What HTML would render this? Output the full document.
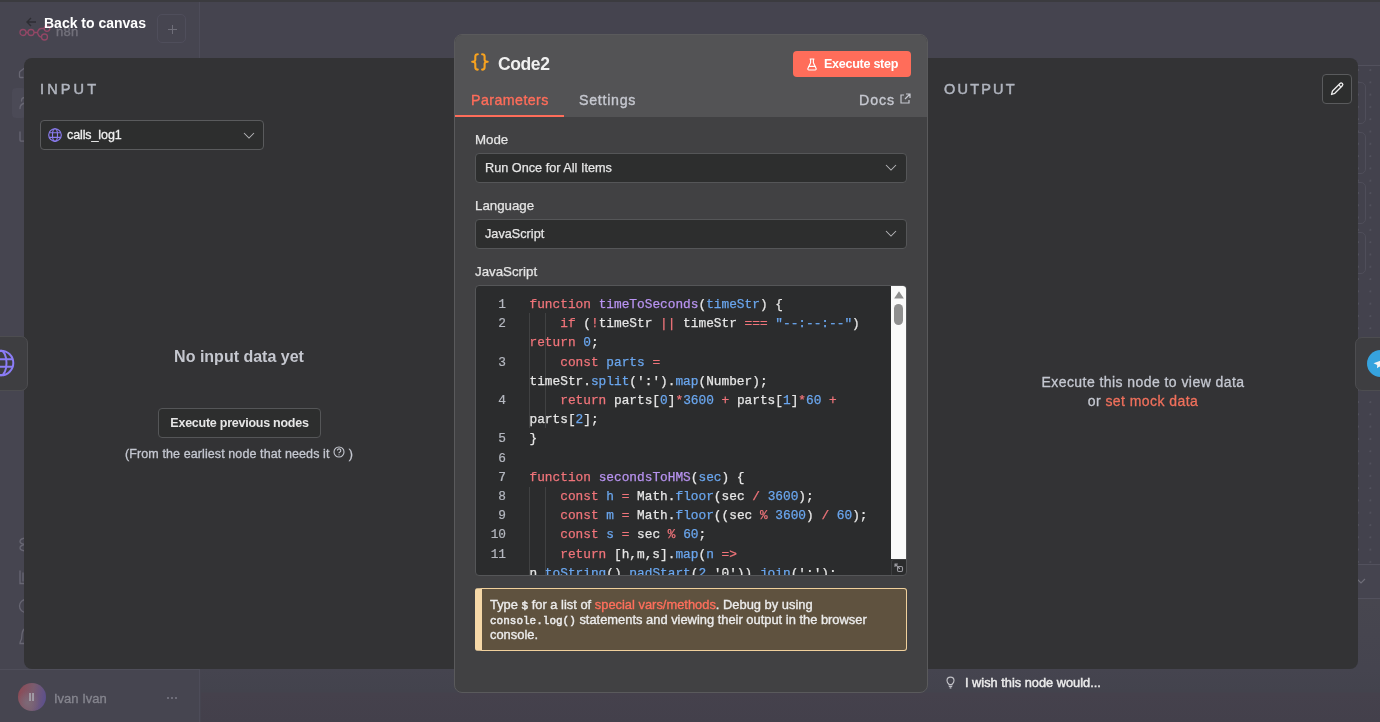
<!DOCTYPE html>
<html><head><meta charset="utf-8">
<style>
*{box-sizing:border-box;margin:0;padding:0}
html,body{width:1380px;height:722px;overflow:hidden}
body{background:#45444f;font-family:"Liberation Sans",sans-serif;position:relative;color:#e0e0e0}
.a{position:absolute}
#topline{left:0;top:0;width:1380px;height:2px;background:#3b3b3f}
#sidebar{left:0;top:2px;width:200px;height:720px;background:#47465199;border-right:1px solid #4d4c59}
#footer{left:0;top:669px;width:200px;height:1px;background:#4f4e5a}
#modal{left:24px;top:58px;width:1334px;height:611px;background:#333335;border-radius:8px}
#back{left:44px;top:15px;font-size:14px;font-weight:bold;color:#fff;white-space:nowrap}
.lio{font-size:14.5px;font-weight:normal;letter-spacing:3.15px;color:#b0b4be;-webkit-text-stroke:0.5px #b0b4be}
#panel{left:454px;top:34px;width:474px;height:659px;background:#414143;border-radius:8px;overflow:hidden;border:1px solid #5a5a5c}
#phead{left:0;top:0;width:100%;height:82px;background:#535355}
.sel{width:432px;height:30px;background:#2d2e2e;border:1px solid #555658;border-radius:4px;font-size:12.7px;color:#e6e6e6;-webkit-text-stroke:0.25px #e6e6e6;padding-left:9px;line-height:29px}
.chev{position:absolute;right:9px;top:10px}
.fl{font-size:13.3px;color:#e4e4e4;-webkit-text-stroke:0.25px #e4e4e4}
#editor{left:475px;top:285px;width:432px;height:291px;background:#2b2c2d;border:1px solid #555658;border-radius:4px;overflow:hidden}
.code{position:absolute;left:53.5px;top:9px;font-family:"Liberation Mono",monospace;font-size:12.8px;line-height:19.2px;color:#e6e6e6;white-space:pre;-webkit-text-stroke:0.25px}
.lns{position:absolute;left:0;top:9px;width:30px;text-align:right;color:#b5b8c0;-webkit-text-stroke:0.2px;font-family:"Liberation Mono",monospace;font-size:12.8px;line-height:19.2px;white-space:pre}
.k{color:#f0747a}.f{color:#b893f0}.p{color:#6aa6ee}.o{color:#f0747a}.n{color:#6aa6ee}.s{color:#6aa6ee}
#hint{left:475px;top:588px;width:432px;height:63px;background:#5f523f;border:1px solid #f0d09c;border-left:7px solid #f6d8a8;border-radius:3px;font-size:12.9px;line-height:15px;color:#ececec;padding:8px 0 0 8px;-webkit-text-stroke:0.35px}
#hint .mono{font-size:11px;line-height:1;-webkit-text-stroke:0.45px}
.mono{font-family:"Liberation Mono",monospace}
.btnx{background:#2d2e2e;border:1px solid #5a5b5d;border-radius:4px}
#wrap{position:absolute;left:0;top:0;width:1380px;height:722px;will-change:transform}
</style></head><body><div id="wrap">
<div id="topline" class="a"></div>
<div id="sidebar" class="a"></div>
<div id="footer" class="a"></div>
<div class="a" style="left:200px;top:65px;width:1180px;height:500px;background-color:#43424d;background-image:radial-gradient(circle at 1.2px 1.2px,#53525e 0.7px,transparent 1.2px);background-size:12.3px 12.3px;background-position:1.1px 3px;border-top:1px solid #52515d;border-bottom:1px solid #52515d"></div>
<div class="a" style="left:200px;top:598px;width:1180px;height:1px;background:#52515d"></div>
<div class="a" style="left:201px;top:599px;width:1179px;height:123px;background:linear-gradient(#47464f 0px,#45444f 70px,#43434d 93px,#45414c 94px,#43404b 123px)"></div>
<svg class="a" style="left:1356px;top:578px" width="10" height="6" viewBox="0 0 10 6"><path d="M1 1l4 4 4-4" fill="none" stroke="#6e6d78" stroke-width="1.1"/></svg>
<div class="a" style="left:1340px;top:82px;width:26px;height:42px;border:1px solid #4f4e5a;border-radius:5px"></div>
<div class="a" style="left:1340px;top:132px;width:26px;height:42px;border:1px solid #4f4e5a;border-radius:5px"></div>
<div class="a" style="left:1340px;top:182px;width:26px;height:42px;border:1px solid #4f4e5a;border-radius:5px"></div>
<div class="a" style="left:1340px;top:232px;width:26px;height:42px;border:1px solid #4f4e5a;border-radius:5px"></div>
<!-- n8n logo -->
<svg class="a" style="left:18px;top:24px" width="34" height="18" viewBox="0 0 34 18">
 <g fill="none" stroke="#934766" stroke-width="1.3">
  <circle cx="5" cy="8.5" r="3"/><circle cx="13" cy="8.5" r="3"/><circle cx="26.5" cy="13" r="3"/><circle cx="29" cy="4.5" r="2.8"/>
  <path d="M8 8.5h2M16 8.5h3.5M19.5 8.5q1-4 4-4h2.7M19.5 8.5q1 4.5 4 4.5"/>
 </g>
</svg>
<div class="a" style="left:56px;top:23.5px;font-size:13px;color:#72717b;-webkit-text-stroke:0.4px #72717b;letter-spacing:0.3px">n8n</div>
<div class="a" style="left:157px;top:14px;width:29px;height:29px;border:1px solid #4f4e5b;border-radius:5px"></div>
<div class="a" style="left:168px;top:28.5px;width:9px;height:1.3px;background:#6f6e79"></div>
<div class="a" style="left:171.8px;top:24.8px;width:1.3px;height:9px;background:#6f6e79"></div>
<div class="a" style="left:12px;top:88px;width:14px;height:30px;background:#4b4a56;border-radius:4px"></div>
<svg class="a" style="left:18px;top:62px" width="8" height="86" viewBox="0 0 8 86"><g fill="none" stroke="#686773" stroke-width="1.3" stroke-linecap="round">
<path d="M8 5L2 9.5Q1.5 10 1.5 11V14.5Q1.5 15.5 2.5 15.5H5"/>
<path d="M7 35.5Q3.5 35.5 3.5 39M7 41Q2 42 2 46.5"/>
<path d="M2 70v8q0 1.2 1.2 1.2H8"/>
</g></svg>
<svg class="a" style="left:18px;top:535px" width="8" height="112" viewBox="0 0 8 112"><g fill="none" stroke="#686773" stroke-width="1.3" stroke-linecap="round">
<path d="M8 3Q2 3.5 2 6.5Q2 9 8 9.5M8 9.5Q2 10 2 13Q2 15.5 8 16"/>
<path d="M2 36v12.5H8M5 38v8"/>
<path d="M8 64.5A6.5 6.5 0 0 0 8 77.5"/>
<path d="M8 93.5Q4.5 94 4 99L3.5 104Q2 107 2 108.5H8"/>
</g></svg>
<!-- footer user -->
<div class="a" style="left:18px;top:683px;width:28px;height:28px;border-radius:50%;background:radial-gradient(circle at 35% 70%,#7c6a78 0%,transparent 45%),linear-gradient(100deg,#8d4a55 5%,#7a5c6e 50%,#5a4f8e 95%)"></div>
<div class="a" style="left:28.5px;top:690.5px;font-size:11px;font-weight:bold;color:#a9a7b0">II</div>
<div class="a" style="left:54px;top:691px;font-size:13px;color:#86868f;-webkit-text-stroke:0.3px">Ivan Ivan</div>
<div class="a" style="left:167px;top:697px;width:2.2px;height:2.2px;border-radius:50%;background:#7c7b87;box-shadow:4px 0 0 #7c7b87,8px 0 0 #7c7b87"></div>

<div id="modal" class="a"></div>
<div id="back" class="a">Back to canvas</div>
<svg class="a" style="left:25px;top:16px" width="12" height="12" viewBox="0 0 12 12"><path d="M11 6H2M6 2L2 6l4 4" fill="none" stroke="#2e2e33" stroke-width="1.4"/></svg>

<!-- INPUT -->
<div class="a lio" style="left:40px;top:81px">INPUT</div>
<div class="a btnx" style="left:40px;top:120px;width:224px;height:30px"></div>
<svg class="a" style="left:48px;top:127.5px" width="14" height="14" viewBox="0 0 14 14"><g fill="none" stroke="#8b7cf0" stroke-width="1.15"><circle cx="7" cy="7" r="6.3"/><ellipse cx="7" cy="7" rx="2.5" ry="6.3"/><path d="M1.2 4.7h11.6M1.2 9.3h11.6"/></g></svg>
<div class="a" style="left:67px;top:128px;font-size:12.5px;letter-spacing:-0.1px;color:#f0f0f0;-webkit-text-stroke:0.3px #f0f0f0">calls_log1</div>
<svg class="a" style="left:243px;top:132px" width="12" height="7" viewBox="0 0 12 7"><path d="M1 1l5 5 5-5" fill="none" stroke="#b5b5b8" stroke-width="1.05"/></svg>
<div class="a" style="left:24px;top:348px;width:430px;text-align:center;font-size:16px;font-weight:bold;color:#c5c7cf">No input data yet</div>
<div class="a btnx" style="left:158px;top:408px;width:163px;height:30px;border-color:#555658"></div>
<div class="a" style="left:158px;top:416px;width:163px;text-align:center;font-size:12.5px;letter-spacing:-0.25px;font-weight:bold;color:#e6e6e6">Execute previous nodes</div>
<div class="a" style="left:125px;top:447px;font-size:12.5px;letter-spacing:0.1px;color:#c5c8d1;white-space:nowrap;-webkit-text-stroke:0.3px">(From the earliest node that needs it <span style="display:inline-block;width:12px"></span> )</div>
<svg class="a" style="left:333px;top:446px" width="12" height="12" viewBox="0 0 12 12"><g fill="none" stroke="#c5c7cf" stroke-width="1.1"><circle cx="6" cy="6" r="5"/><path d="M4.4 4.6a1.7 1.7 0 1 1 2.2 1.6c-.5.2-.6.5-.6 1"/></g><circle cx="6" cy="8.8" r=".6" fill="#c5c7cf"/></svg>

<!-- left globe node -->
<div class="a" style="left:-12px;top:336px;width:39.5px;height:55px;background:#3e3e41;border:1px solid #4d4d50;border-radius:7px"></div>
<svg class="a" style="left:-14.4px;top:348.4px" width="30" height="30" viewBox="0 0 30 30"><g fill="none" stroke="#8b7cf6" stroke-width="2"><circle cx="15" cy="15" r="12.3"/><ellipse cx="15" cy="15" rx="5.5" ry="12.3"/><path d="M3 11.15h24M3 18.85h24"/></g></svg>

<!-- OUTPUT -->
<div class="a lio" style="left:944px;top:81px;letter-spacing:2.2px">OUTPUT</div>
<div class="a btnx" style="left:1322px;top:74px;width:30px;height:30px"></div>
<svg class="a" style="left:1329px;top:81px" width="16" height="16" viewBox="0 0 16 16"><path d="M2.5 13.5l1-3.5 7.5-7.5a1.5 1.5 0 0 1 2.3 2.3L5.8 12.3z" fill="none" stroke="#eeeeee" stroke-width="1.3" stroke-linejoin="round"/><path d="M9.8 3.8l2.3 2.3" stroke="#eeeeee" stroke-width="1.2"/></svg>
<div class="a" style="left:928px;top:373px;width:430px;text-align:center;font-size:14px;letter-spacing:0.44px;line-height:19px;color:#c5c8d1;-webkit-text-stroke:0.3px">Execute this node to view data<br>or <span style="color:#f0705c">set mock data</span></div>

<!-- right telegram node -->
<div class="a" style="left:1354.5px;top:336.5px;width:40px;height:54.5px;background:#3e3e41;border:1px solid #4d4d50;border-radius:7px"></div>
<div class="a" style="left:1367px;top:350px;width:27px;height:27px;border-radius:50%;background:#36a3de"></div>
<svg class="a" style="left:1373px;top:358px" width="8" height="12" viewBox="0 0 8 12"><path d="M0.5 5.3L8 2.5V11L6.5 8.5L4 10.3L4.2 7z" fill="#f4f4f4"/></svg>

<!-- I wish -->
<svg class="a" style="left:945.5px;top:675.5px" width="9" height="13" viewBox="0 0 9 13"><g fill="none" stroke="#c0c0c6" stroke-width="1.15"><path d="M2.9 8.6V8C1.7 7.3 1 6.2 1 4.6a3.5 3.5 0 0 1 7 0c0 1.6-.7 2.7-1.9 3.4v.6z"/><path d="M2.8 10.4h3.4M3.6 11.8h1.8"/></g></svg>
<div class="a" style="left:965px;top:675.4px;font-size:12.8px;letter-spacing:0px;color:#ececec;-webkit-text-stroke:0.45px #ececec">I wish this node would...</div>

<!-- Node panel -->
<div id="panel" class="a"><div id="phead" class="a"></div></div>
<svg class="a" style="left:470px;top:52px" width="20" height="20" viewBox="0 0 20 20"><g fill="none" stroke="#f7a21f" stroke-width="2.1" stroke-linecap="round" stroke-linejoin="round"><path d="M7.8 2.2C6.2 2.2 5.3 3 5.3 4.5V7.8C5.3 9 4 9.8 2.2 9.8C4 9.8 5.3 10.6 5.3 11.8V15.3C5.3 16.8 6.2 17.6 7.8 17.6"/><path d="M12.1 2.2C13.7 2.2 14.6 3 14.6 4.5V7.8C14.6 9 15.9 9.8 17.7 9.8C15.9 9.8 14.6 10.6 14.6 11.8V15.3C14.6 16.8 13.7 17.6 12.1 17.6"/></g></svg>
<div class="a" style="left:498px;top:54px;font-size:17.5px;letter-spacing:-0.4px;font-weight:bold;color:#f0f0f0">Code2</div>
<div class="a" style="left:793px;top:51px;width:118px;height:26px;background:#ff6d5a;border-radius:4px"></div>
<svg class="a" style="left:807px;top:57.5px" width="10" height="13" viewBox="0 0 10 13"><g fill="none" stroke="#fff" stroke-width="1.15" stroke-linejoin="round" stroke-linecap="round"><path d="M3 1h4M3.6 1v3.8L0.9 10.6a1 1 0 0 0 .9 1.4h6.4a1 1 0 0 0 .9-1.4L6.4 4.8V1"/><path d="M2 8.3h6"/></g></svg>
<div class="a" style="left:824px;top:56.6px;font-size:12.6px;letter-spacing:-0.3px;font-weight:bold;color:#fff">Execute step</div>
<div class="a" style="left:471px;top:92px;font-size:14.2px;letter-spacing:0.45px;color:#ff6d5a;-webkit-text-stroke:0.35px #ff6d5a">Parameters</div>
<div class="a" style="left:455px;top:114.7px;width:109px;height:2.5px;background:#ff6d5a"></div>
<div class="a" style="left:579px;top:92px;font-size:14.2px;letter-spacing:0.73px;color:#c6c8d0;-webkit-text-stroke:0.35px #c6c8d0">Settings</div>
<div class="a" style="left:859px;top:92px;font-size:14.2px;letter-spacing:0.9px;color:#c6c8d0;-webkit-text-stroke:0.35px #c6c8d0">Docs</div>
<svg class="a" style="left:899px;top:93px" width="12" height="12" viewBox="0 0 12 12"><g fill="none" stroke="#c6c8d0" stroke-width="1.2"><path d="M5 2H2v8h8V7M7 1h4v4M11 1L6 6"/></g></svg>

<div class="a fl" style="left:475px;top:132px">Mode</div>
<div class="a sel" style="left:475px;top:153px">Run Once for All Items<svg class="chev" width="12" height="7" viewBox="0 0 12 7"><path d="M1 1l5 5 5-5" fill="none" stroke="#b5b5b8" stroke-width="1.05"/></svg></div>
<div class="a fl" style="left:475px;top:198px">Language</div>
<div class="a sel" style="left:475px;top:219px">JavaScript<svg class="chev" width="12" height="7" viewBox="0 0 12 7"><path d="M1 1l5 5 5-5" fill="none" stroke="#b5b5b8" stroke-width="1.05"/></svg></div>
<div class="a fl" style="left:475px;top:264px">JavaScript</div>
<div id="editor" class="a">
<div class="a" style="left:53px;top:27px;width:1px;height:115px;background:#404142"></div>
<div class="a" style="left:68.5px;top:27px;width:1px;height:115px;background:#404142"></div>
<div class="a" style="left:53px;top:201px;width:1px;height:90px;background:#404142"></div>
<div class="a" style="left:68.5px;top:201px;width:1px;height:90px;background:#404142"></div>
<div class="lns">1
2

3

4

5
6
7
8
9
10
11</div>
<div class="code"><span class="k">function</span> <span class="f">timeToSeconds</span>(<span class="p">timeStr</span>) {
    <span class="k">if</span> (<span class="o">!</span>timeStr <span class="o">||</span> timeStr <span class="o">===</span> <span class="s">"--:--:--"</span>)
<span class="k">return</span> <span class="n">0</span>;
    <span class="k">const</span> <span class="p">parts</span> <span class="o">=</span>
timeStr.<span class="p">split</span>(':').<span class="p">map</span>(Number);
    <span class="k">return</span> parts[<span class="n">0</span>]<span class="o">*</span><span class="n">3600</span> <span class="o">+</span> parts[<span class="n">1</span>]<span class="o">*</span><span class="n">60</span> <span class="o">+</span>
parts[<span class="n">2</span>];
}

<span class="k">function</span> <span class="f">secondsToHMS</span>(<span class="p">sec</span>) {
    <span class="k">const</span> <span class="p">h</span> <span class="o">=</span> Math.<span class="p">floor</span>(sec <span class="o">/</span> <span class="n">3600</span>);
    <span class="k">const</span> <span class="p">m</span> <span class="o">=</span> Math.<span class="p">floor</span>((sec <span class="o">%</span> <span class="n">3600</span>) <span class="o">/</span> <span class="n">60</span>);
    <span class="k">const</span> <span class="p">s</span> <span class="o">=</span> sec <span class="o">%</span> <span class="n">60</span>;
    <span class="k">return</span> [h,m,s].<span class="p">map</span>(<span class="p">n</span> <span class="o">=&gt;</span>
n.<span class="p">toString</span>().<span class="p">padStart</span>(<span class="n">2</span>,'0')).<span class="p">join</span>(':');</div>
<!-- scrollbar -->
<div class="a" style="left:415px;top:0;width:16px;height:273px;background:#fafafa;border-top-right-radius:3px"></div>
<svg class="a" style="left:417.5px;top:4.5px" width="10" height="8" viewBox="0 0 10 8"><path d="M5 0.3L9.7 7.2Q9.9 7.6 9.4 7.6H0.6Q0.1 7.6 0.3 7.2z" fill="#8f8f8f"/></svg>
<div class="a" style="left:418px;top:18px;width:9px;height:21px;background:#8f8f8f;border-radius:4.5px"></div>
<div class="a" style="left:415px;top:273px;width:16px;height:17px;border-left:1px solid #3d3e40;border-top:1px solid #3d3e40;border-top-left-radius:3px"></div><svg class="a" style="left:418px;top:277px" width="10" height="10" viewBox="0 0 10 10"><g fill="none" stroke="#9a9aa0" stroke-width="1.1" stroke-linecap="round"><path d="M1 1l4.5 4.5M1 1v2.5M1 1h2.5"/><rect x="3.5" y="3.5" width="5" height="5" rx="1.2"/></g></svg>
</div>
<div id="hint" class="a">Type <span class="mono">$</span> for a list of <span style="color:#ff6f5c">special vars/methods</span>. Debug by using<br><span class="mono">console.log()</span> statements and viewing their output in the browser<br>console.</div>
</div></body></html>
